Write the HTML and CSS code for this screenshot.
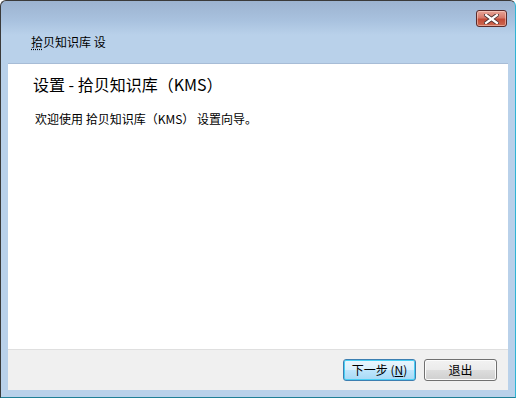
FILE: index.html
```html
<!DOCTYPE html>
<html lang="zh-CN">
<head>
  <meta charset="UTF-8">
  <title>拾贝知识库 设</title>
  <link rel="stylesheet" href="styles.css">
</head>
<body>
  <div class="window">
    <div class="titlebar">
      <div class="caption-buttons">
        <div class="close-btn">
          <svg width="15" height="10" viewBox="0 0 15 10">
            <path d="M2 1 L13 9 M13 1 L2 9" stroke="#4a3030" stroke-width="4" stroke-linecap="square"/>
            <path d="M2 1 L13 9 M13 1 L2 9" stroke="#ffffff" stroke-width="2.2" stroke-linecap="square"/>
          </svg>
        </div>
      </div>
      <div class="caption"><span class="hotkey">拾</span>贝知识库 设</div>
    </div>
    <div class="client">
      <div class="page">
        <h1 class="page-title">设置 - 拾贝知识库（KMS）</h1>
        <p class="page-text">欢迎使用 拾贝知识库（KMS） 设置向导。</p>
      </div>
      <div class="footer">
        <button class="btn btn-default">下一步 (<u>N</u>)</button>
        <button class="btn">退出</button>
      </div>
    </div>
  </div>
</body>
</html>
```

FILE: styles.css
```css
body {
  margin: 0;
  background: #ffffff;
  font-family: "Noto Sans CJK SC", "DejaVu Sans", sans-serif;
  font-size: 12px;
  color: #000;
}

.window {
  width: 516px;
  height: 398px;
  box-sizing: border-box;
  border-top: 1px solid #3a3a3a;
  border-left: 1px solid #3a3a3a;
  border-right: 1px solid #2fb4d4;
  border-bottom: 1px solid #1f7f96;
  border-radius: 6px 6px 0 0;
  background: linear-gradient(#9cb3d0 0px, #a9c2df 20px, #b9d1ea 34px, #b9d1ea 100%);
  display: flex;
  flex-direction: column;
  overflow: hidden;
}

.titlebar {
  height: 62px;
  display: flex;
  flex-direction: column;
}

.caption-buttons {
  display: flex;
  justify-content: flex-end;
  padding: 9px 8px 0 0;
}

.close-btn {
  width: 29px;
  height: 15px;
  border: 1px solid #5a2b2b;
  border-radius: 3px;
  background: linear-gradient(#e8a598 0%, #d6796a 45%, #c24a36 55%, #cd6a52 100%);
  box-shadow: inset 0 0 0 1px rgba(255, 220, 210, 0.5);
  display: flex;
  align-items: center;
  justify-content: center;
}

.caption {
  margin-top: 6px;
  padding-left: 30px;
  line-height: 17px;
  font-size: 12px;
}

.hotkey {
  text-decoration: underline dotted;
  text-underline-offset: 2px;
}

.client {
  flex: 1;
  margin: 0 7px 7px 7px;
  display: flex;
  flex-direction: column;
  border-top: 1px solid #a7bcd6;
}

.page {
  flex: 1;
  background: #ffffff;
  padding: 9px 0 0 25px;
}

.page-title {
  margin: 0;
  font-size: 16px;
  font-weight: normal;
  line-height: 22px;
}

.page-text {
  margin: 16px 0 0 2px;
  font-size: 12px;
  line-height: 16px;
}

.footer {
  height: 40px;
  background: #f0f0f0;
  border-top: 1px solid #dfdfdf;
  display: flex;
  justify-content: flex-end;
  align-items: flex-start;
  gap: 8px;
  padding: 9px 11px 0 0;
  box-sizing: border-box;
  height: 41px;
}

.btn {
  width: 73px;
  height: 22px;
  padding: 0;
  font-family: "Noto Sans CJK SC", "DejaVu Sans", sans-serif;
  font-size: 12px;
  line-height: 18px;
  color: #000;
  border: 1px solid #707070;
  border-radius: 3px;
  background: linear-gradient(#f2f2f2 0%, #ebebeb 50%, #dddddd 51%, #cfcfcf 100%);
  box-shadow: inset 0 0 0 1px #fcfcfc;
}

.btn-default {
  border-color: #3c7fb1;
  background: linear-gradient(#eaf6fd 0%, #d9f0fc 50%, #bee6fd 51%, #a7d9f5 100%);
  box-shadow: inset 0 0 0 1px #48d0f5;
}

.btn u {
  text-decoration: underline;
}
```
